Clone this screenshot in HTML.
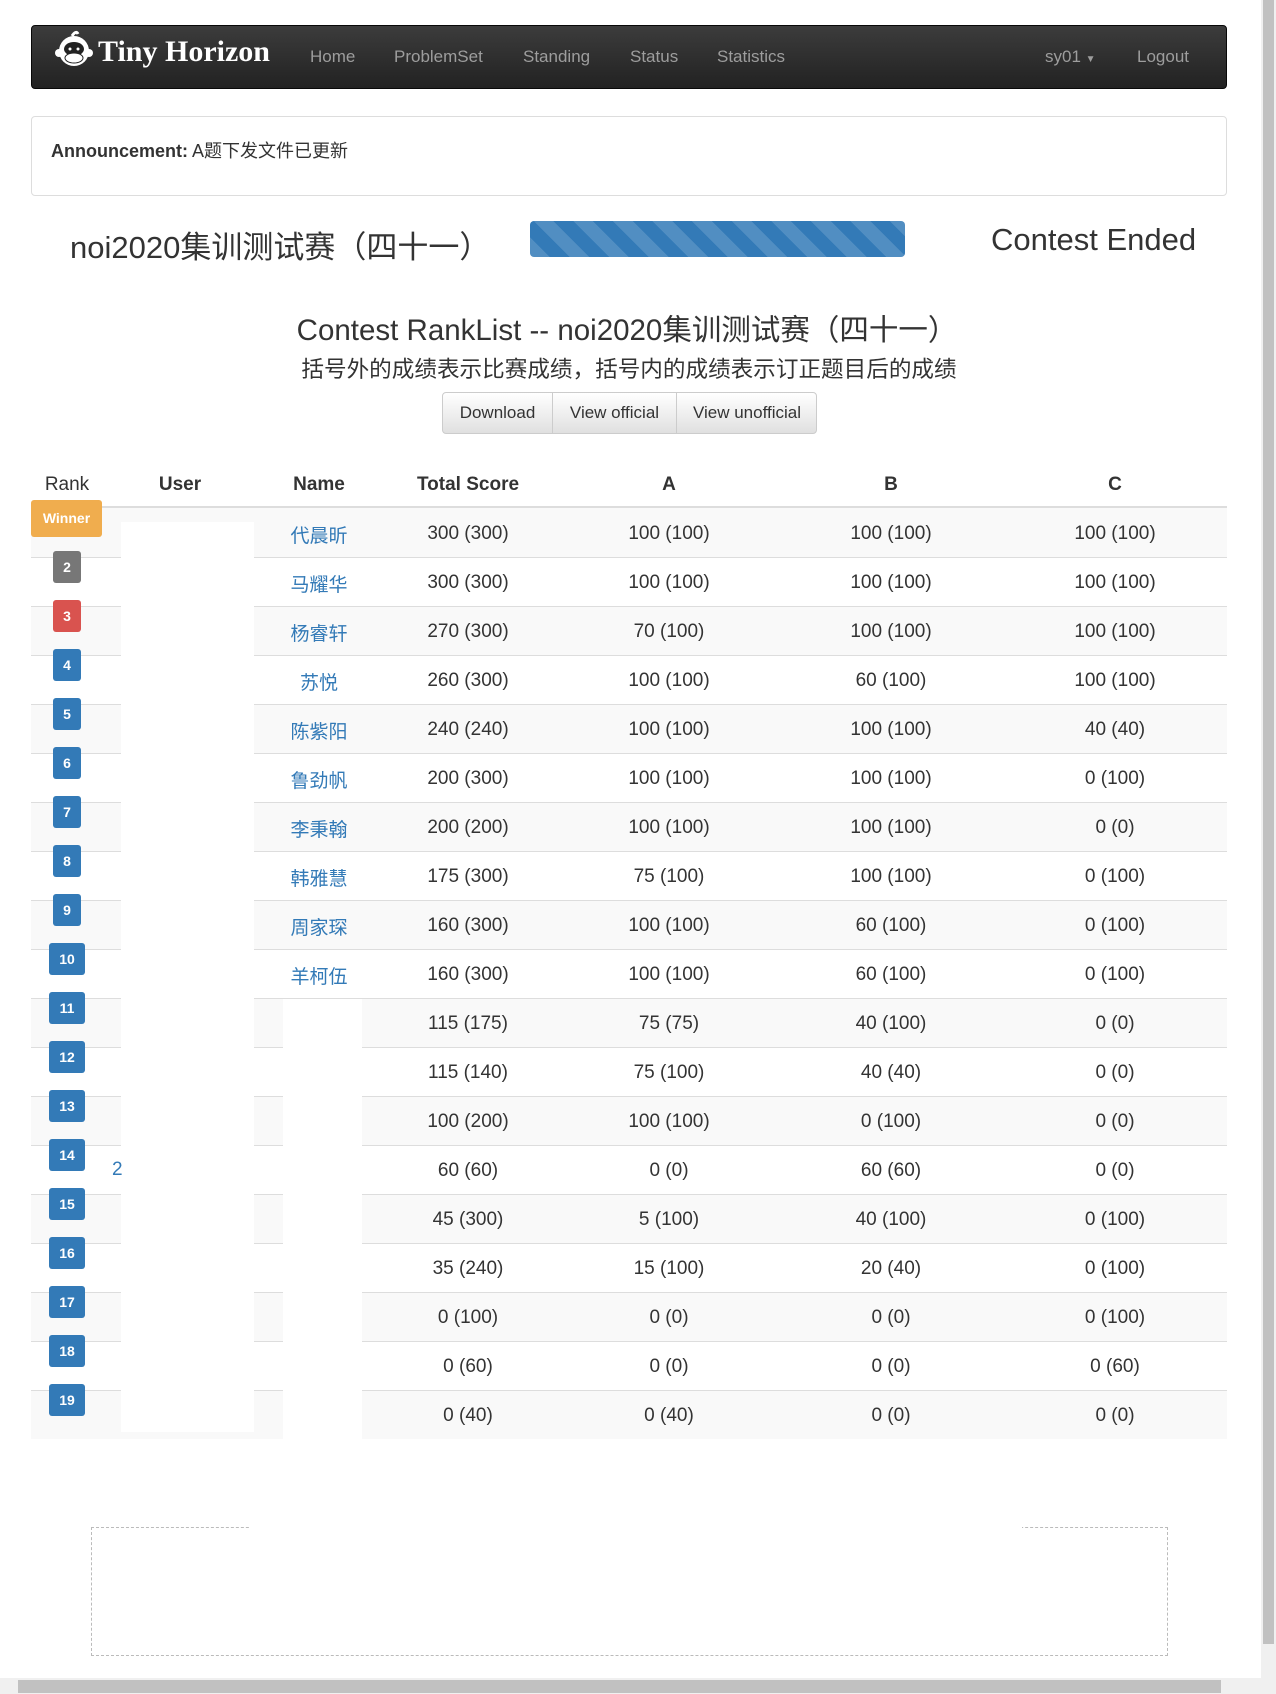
<!DOCTYPE html>
<html><head><meta charset="utf-8">
<style>
*{margin:0;padding:0;box-sizing:border-box}
body{width:1276px;height:1694px;position:relative;background:#fff;font-family:"Liberation Sans","Noto Sans CJK SC",sans-serif;color:#333;overflow:hidden}
.a{position:absolute}
.nav{left:31px;top:25px;width:1196px;height:64px;border-radius:4px;background:linear-gradient(#3c3c3c,#222);border:1px solid #080808}
.nav span{position:absolute;top:21px;font-size:17px;color:#9d9d9d}
.ann{left:31px;top:116px;width:1196px;height:80px;border:1px solid #ddd;border-radius:4px}
.row{position:absolute;left:31px;width:1196px;height:49px;border-top:1px solid #ddd}
.c{position:absolute;font-size:19px;text-align:center;width:200px;margin-left:-100px}
.bd{position:absolute;color:#fff;font-weight:bold;font-size:14px;text-align:center;border-radius:3px;line-height:32px;height:32px}
</style></head><body>
<div class="a nav">
 <svg class="a" style="left:22px;top:2px" width="40" height="42" viewBox="0 0 40 42"><circle cx="20" cy="23" r="15" fill="#fff"/><circle cx="5" cy="25" r="4" fill="#fff"/><circle cx="35" cy="25" r="4" fill="#fff"/><path d="M18 8 q4-6 6-2" stroke="#fff" stroke-width="3" fill="none"/><ellipse cx="20" cy="21" rx="10" ry="7" fill="#222"/><ellipse cx="20" cy="30" rx="9" ry="5" fill="#fff" stroke="#222"/><circle cx="16" cy="21" r="1.5" fill="#fff"/><circle cx="24" cy="21" r="1.5" fill="#fff"/></svg>
 <div class="a" style="left:66px;top:9px;color:#fff;font-family:'Liberation Serif',serif;font-weight:bold;font-size:30px;letter-spacing:0px">Tiny Horizon</div>
 <span style="left:278px">Home</span><span style="left:362px">ProblemSet</span><span style="left:491px">Standing</span><span style="left:598px">Status</span><span style="left:685px">Statistics</span>
 <span style="left:1013px">sy01 <span style="position:static;font-size:10px">▼</span></span><span style="left:1105px">Logout</span>
</div>
<div class="a ann"><div class="a" style="left:19px;top:20px;font-size:18px"><b>Announcement:</b> A题下发文件已更新</div></div>
<div class="a" style="left:70px;top:222px;font-size:31px">noi2020集训测试赛（四十一）</div>
<div class="a" style="left:530px;top:221px;width:375px;height:36px;border-radius:4px;background:#337ab7;background-image:repeating-linear-gradient(45deg,rgba(255,255,255,.15) 0 14px,transparent 14px 28px)"></div>
<div class="a" style="left:991px;top:222px;font-size:31px">Contest Ended</div>
<div class="a" style="left:0;width:1254px;top:307px;text-align:center;font-size:29.5px">Contest RankList -- noi2020集训测试赛（四十一）</div>
<div class="a" style="left:0;width:1258px;top:351px;text-align:center;font-size:22.6px">括号外的成绩表示比赛成绩，括号内的成绩表示订正题目后的成绩</div>
<div class="a" style="left:442px;top:392px;width:375px;height:42px;border:1px solid #ccc;border-radius:4px;background:linear-gradient(#fff,#e0e0e0);font-size:17px">
 <div class="a" style="left:0;width:109px;top:10px;text-align:center">Download</div>
 <div class="a" style="left:109px;top:0;width:1px;height:40px;background:#ccc"></div>
 <div class="a" style="left:110px;width:123px;top:10px;text-align:center">View official</div>
 <div class="a" style="left:233px;top:0;width:1px;height:40px;background:#ccc"></div>
 <div class="a" style="left:234px;width:140px;top:10px;text-align:center">View unofficial</div>
</div>
<div class="a" style="top:474px;left:0;width:1276px;height:24px">
 <div class="c" style="left:67px">Rank</div><div class="c" style="left:180px;font-weight:bold">User</div><div class="c" style="left:319px;font-weight:bold">Name</div><div class="c" style="left:468px;font-weight:bold">Total Score</div><div class="c" style="left:669px;font-weight:bold">A</div><div class="c" style="left:891px;font-weight:bold">B</div><div class="c" style="left:1115px;font-weight:bold">C</div>
</div>
<div class="a" style="left:31px;top:506px;width:1196px;height:2px;background:#ddd"></div>
<div id="rows"></div>
<script>
var d=[["代晨昕","300 (300)","100 (100)","100 (100)","100 (100)"],["马耀华","300 (300)","100 (100)","100 (100)","100 (100)"],["杨睿轩","270 (300)","70 (100)","100 (100)","100 (100)"],["苏悦","260 (300)","100 (100)","60 (100)","100 (100)"],["陈紫阳","240 (240)","100 (100)","100 (100)","40 (40)"],["鲁劲帆","200 (300)","100 (100)","100 (100)","0 (100)"],["李秉翰","200 (200)","100 (100)","100 (100)","0 (0)"],["韩雅慧","175 (300)","75 (100)","100 (100)","0 (100)"],["周家琛","160 (300)","100 (100)","60 (100)","0 (100)"],["羊柯伍","160 (300)","100 (100)","60 (100)","0 (100)"],["","115 (175)","75 (75)","40 (100)","0 (0)"],["","115 (140)","75 (100)","40 (40)","0 (0)"],["","100 (200)","100 (100)","0 (100)","0 (0)"],["","60 (60)","0 (0)","60 (60)","0 (0)"],["","45 (300)","5 (100)","40 (100)","0 (100)"],["","35 (240)","15 (100)","20 (40)","0 (100)"],["","0 (100)","0 (0)","0 (0)","0 (100)"],["","0 (60)","0 (0)","0 (0)","0 (60)"],["","0 (40)","0 (40)","0 (0)","0 (0)"]];
var h="";
for(var i=0;i<19;i++){var t=508+i*49;
h+='<div class="row" style="top:'+t+'px;background:'+(i%2==0?'#f9f9f9':'#fff')+(i==0?';border-top:none':'')+'"></div>';
}
h+='<div class="a" style="left:121px;top:522px;width:133px;height:910px;background:#fff"></div>';
h+='<div class="a" style="left:283px;top:999px;width:79px;height:440px;background:#fff"></div>';
h+='<div class="a" style="left:112px;top:1159px;font-size:19px;color:#337ab7">2</div>';
for(var i=0;i<19;i++){var t=508+i*49;var r=d[i];
h+='<div class="c" style="left:319px;top:'+(t+13)+'px;color:#337ab7">'+r[0]+'</div>';
h+='<div class="c" style="left:468px;top:'+(t+15)+'px">'+r[1]+'</div>';
h+='<div class="c" style="left:669px;top:'+(t+15)+'px">'+r[2]+'</div>';
h+='<div class="c" style="left:891px;top:'+(t+15)+'px">'+r[3]+'</div>';
h+='<div class="c" style="left:1115px;top:'+(t+15)+'px">'+r[4]+'</div>';
if(i==0){h+='<div class="bd" style="left:31px;top:500px;width:71px;height:37px;line-height:37px;background:#f0ad4e">Winner</div>';}
else{var col=i==1?'#777':(i==2?'#d9534f':'#337ab7');var w=i<9?28:36;
h+='<div class="bd" style="left:'+(67-w/2)+'px;top:'+(t-6)+'px;width:'+w+'px;background:'+col+'">'+(i+1)+'</div>';}
}
document.getElementById('rows').innerHTML=h;
</script>
<div class="a" style="left:91px;top:1527px;width:1077px;height:129px;border:1px dashed #bbb"></div>
<div class="a" style="left:250px;top:1526px;width:772px;height:3px;background:#fff"></div>
<div class="a" style="left:1261px;top:0;width:15px;height:1678px;background:#f0f0f0"></div>
<div class="a" style="left:1263px;top:0;width:11px;height:1644px;background:#c1c1c1"></div>
<div class="a" style="left:0;top:1678px;width:1276px;height:16px;background:#f0f0f0"></div>
<div class="a" style="left:18px;top:1680px;width:1203px;height:13px;background:#c1c1c1"></div>
</body></html>
